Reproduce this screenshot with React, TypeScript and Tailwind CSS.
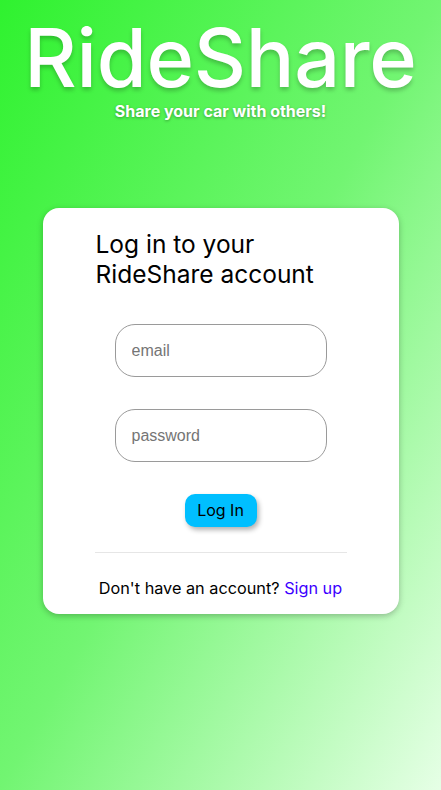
import React from "react";

export default function App() {
  return (
    <div
      className="min-h-[790px] w-full flex flex-col items-center bg-[linear-gradient(to_bottom_right,#2ff22f_0%,#72f572_50%,#e6ffe6_100%)] font-['Inter',sans-serif]"
    >
      <h1 className="mt-[18px] text-[81px] leading-[80px] font-medium text-white tracking-[-0.3px] [text-shadow:0_3px_4px_rgba(0,0,0,0.22)]">
        RideShare
      </h1>
      <p className="mt-[3px] text-[16px] leading-[20px] font-bold text-white [text-shadow:0_1px_3px_rgba(0,0,0,0.35)]">
        Share your car with others!
      </p>
      <div className="mt-[87px] w-[356px] bg-white rounded-[16px] shadow-[0_2px_6px_rgba(0,0,0,0.25)] px-[52px] pt-[21px] pb-[16px] flex flex-col items-center">
        <h2 className="self-stretch pl-[1px] text-[24.5px] leading-[30px] text-black font-normal">
          Log in to your RideShare account
        </h2>
        <input
          type="email"
          placeholder="email"
          className="mt-[35px] w-[212px] h-[53px] rounded-[20px] border border-[#9a9a9a] px-[16px] text-[16px] font-['Liberation_Sans',Arial,sans-serif] placeholder:text-[#757575] outline-none"
        />
        <input
          type="password"
          placeholder="password"
          className="mt-[32px] w-[212px] h-[53px] rounded-[20px] border border-[#9a9a9a] px-[16px] text-[16px] font-['Liberation_Sans',Arial,sans-serif] placeholder:text-[#757575] outline-none"
        />
        <button className="mt-[32px] w-[72px] h-[33px] rounded-[10px] bg-[#00bfff] text-[16px] leading-[19px] text-black shadow-[2px_3px_5px_rgba(0,0,0,0.3)]">
          Log In
        </button>
        <div className="mt-[25px] self-stretch h-px bg-[#e6e6e6]" />
        <p className="mt-[26px] text-[16.25px] leading-[19px] text-black">
          Don't have an account? <span className="text-[#3c00ff]">Sign up</span>
        </p>
      </div>
    </div>
  );
}
